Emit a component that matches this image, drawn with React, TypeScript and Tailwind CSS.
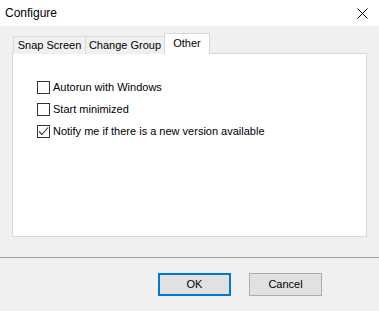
const Check = ({ checked, label }: { checked?: boolean; label: string }) => (
  <div className="flex h-[22px] items-center">
    <div className="flex h-[13px] w-[13px] items-center justify-center border border-[#333333] bg-white">
      {checked && (
        <svg width="11" height="11" viewBox="0 0 11 11" fill="none">
          <path d="M1 5.5 L4 8.5 L10 1.5" stroke="#333333" strokeWidth="1.1" />
        </svg>
      )}
    </div>
    <span className="ml-[3px] whitespace-nowrap text-[11px] leading-none text-black">{label}</span>
  </div>
);

export default function App() {
  return (
    <div
      className="relative flex h-[311px] w-[379px] flex-col overflow-hidden bg-[#f0f0f0]"
      style={{ fontFamily: '"Liberation Sans", Arial, sans-serif' }}
    >
      <div className="flex h-[26px] items-center justify-between bg-white pl-[5px] pr-[11px]">
        <span className="text-[12px] text-black">Configure</span>
        <svg width="11" height="11" viewBox="0 0 11 11">
          <path d="M0.5 0.5 L10.5 10.5 M10.5 0.5 L0.5 10.5" stroke="#000" strokeWidth="1" />
        </svg>
      </div>

      <div className="px-[12px] pt-[7px]">
        <div className="relative z-10 -mb-px ml-[1px] flex h-[21px] items-end whitespace-nowrap text-[11px] text-black">
          <div className="flex h-[18px] w-[73px] items-center justify-center border border-b-0 border-[#d9d9d9] bg-[#f0f0f0]">
            Snap Screen
          </div>
          <div className="-ml-px flex h-[18px] w-[80px] items-center justify-center border border-b-0 border-[#d9d9d9] bg-[#f0f0f0]">
            Change Group
          </div>
          <div className="-ml-px flex h-[21px] w-[46px] items-center justify-center border border-b-0 border-[#d9d9d9] bg-white pb-[2px]">
            Other
          </div>
        </div>
        <div className="h-[184px] border border-[#d9d9d9] bg-white pl-[24px] pt-[22px]">
          <Check label="Autorun with Windows" />
          <Check label="Start minimized" />
          <Check checked label="Notify me if there is a new version available" />
        </div>
      </div>

      <div className="mt-[20px] h-px bg-[#a0a0a0]" />

      <div className="flex justify-end gap-[18px] pr-[57px] pt-[15px]">
        <button className="h-[23px] w-[73px] border-2 border-[#0078d7] bg-[#e1e1e1] text-[11px] text-black">
          OK
        </button>
        <button className="h-[23px] w-[73px] border border-[#adadad] bg-[#e1e1e1] text-[11px] text-black">
          Cancel
        </button>
      </div>
    </div>
  );
}
